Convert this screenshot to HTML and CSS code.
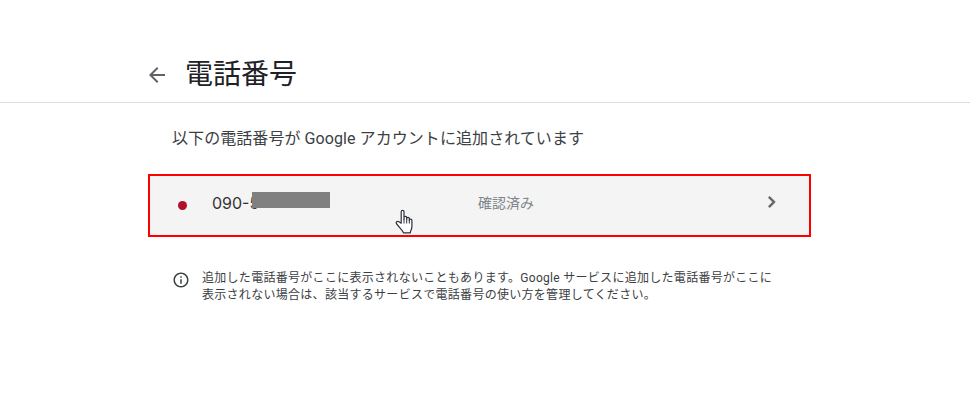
FILE: index.html
```html
<!DOCTYPE html>
<html lang="ja">
<head>
<meta charset="utf-8">
<title>電話番号</title>
<link rel="stylesheet" href="styles.css">
</head>
<body>
<header class="header">
  <svg class="back" width="24" height="24" viewBox="0 0 24 24"><path d="M20 11H7.830l5.590-5.590L12 4l-8 8 8 8 1.410-1.410L7.830 13H20z"/></svg>
  <h1 class="title">電話番号</h1>
</header>
<main class="main">
  <p class="intro">以下の電話番号が Google アカウントに追加されています</p>
  <div class="row">
    <span class="dot"></span>
    <span class="phone">090-5<span class="redact"></span></span>
    <span class="status">確認済み</span>
    <svg class="chev" width="24" height="24" viewBox="0 0 24 24"><path d="M9.700 6.300 8.300 7.700 12.600 12l-4.300 4.300 1.400 1.400 5.700-5.700z"/></svg>
    <svg class="cursor" width="20" height="25" viewBox="0 0 20 25"><path d="M6.200 14.200V2.800c0-2 2.800-2 2.800 0v7.400V8.600c0-1.700 2.700-1.700 2.700 0v2V9.600c0-1.600 2.600-1.600 2.600 0v1.600c0-1.500 2.600-1.500 2.600.2v6.200c0 1.800-.4 2.800-1 4-.5 1-.6 1.600-.6 2.200H8.500c-.6-2-2.300-3.300-4-5.400L1.700 15c-1.300-1.700.6-3.500 2.300-2.200z" fill="#fff" stroke="#2a2f3a" stroke-width="1.200" stroke-linejoin="round"/><path d="M9 10v4.500M11.700 10.500v4M14.300 11v3.500" fill="none" stroke="#2a2f3a" stroke-width="1"/></svg>
  </div>
  <div class="note">
    <svg class="info" width="18" height="18" viewBox="0 0 24 24"><path d="M11 7h2v2h-2zm0 4h2v6h-2zm1-9C6.480 2 2 6.480 2 12s4.480 10 10 10 10-4.480 10-10S17.520 2 12 2zm0 18c-4.410 0-8-3.590-8-8s3.590-8 8-8 8 3.590 8 8-3.590 8-8 8z"/></svg>
    <p class="note-text">追加した電話番号がここに表示されないこともあります。Google サービスに追加した電話番号がここに<br>表示されない場合は、該当するサービスで電話番号の使い方を管理してください。</p>
  </div>
</main>
</body>
</html>
```
FILE: styles.css
```css
* { box-sizing: border-box; }
html, body { margin: 0; padding: 0; background: #fff; }
body { width: 970px; height: 400px; overflow: hidden; font-family: Roboto, "Noto Sans CJK JP", sans-serif; color: #3c4043; }
.header { height: 103px; border-bottom: 1px solid #dadce0; padding: 51px 0 0 145px; display: flex; align-items: flex-start; }
.back { fill: #5f6368; margin-top: 12px; flex: none; }
.title { margin: 0 0 0 16px; font-size: 28px; line-height: 48px; font-weight: 400; color: #202124; }
.main { padding: 0 159px 0 148px; }
.intro { margin: 0; padding: 24px 0 0 24px; font-size: 16px; line-height: 24px; letter-spacing: 0.07px; color: #3c4043; }
.row { position: relative; height: 63px; margin-top: 23px; padding-bottom: 7px; background: #f4f4f4; border: 2px solid #f00; display: flex; align-items: center; }
.dot { width: 9px; height: 9px; border-radius: 50%; background: #b0102a; margin: 6px 0 0 28px; flex: none; }
.phone { position: relative; margin: 2px 0 0 25px; width: 266px; font-family: Inter, sans-serif; font-size: 16px; color: #333; flex: none; }
.redact { position: absolute; left: 40px; top: -1px; width: 78px; height: 16px; background: #808080; }
.status { font-size: 14px; color: #80868b; flex: 1; }
.chev { fill: #5f6368; stroke: #5f6368; stroke-width: 0.5; margin-right: 25px; flex: none; }
.cursor { position: absolute; left: 245px; top: 33px; }
.note { display: flex; margin-top: 33px; padding-left: 24px; }
.info { fill: #3c4043; flex: none; margin-top: 1px; }
.note-text { margin: 0 0 0 12px; font-size: 12px; line-height: 17px; letter-spacing: 0.29px; color: #3c4043; white-space: nowrap; }
```
